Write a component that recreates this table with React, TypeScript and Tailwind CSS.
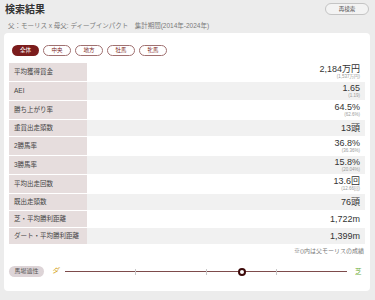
import React from 'react';

type Row = { label: string; value: string; sub?: string };

const rows: Row[] = [
  { label: '平均獲得賞金', value: '2,184万円', sub: '(1,537万円)' },
  { label: 'AEI', value: '1.65', sub: '(1.19)' },
  { label: '勝ち上がり率', value: '64.5%', sub: '(62.6%)' },
  { label: '重賞出走頭数', value: '13頭' },
  { label: '2勝馬率', value: '36.8%', sub: '(36.36%)' },
  { label: '3勝馬率', value: '15.8%', sub: '(20.04%)' },
  { label: '平均出走回数', value: '13.6回', sub: '(12.66回)' },
  { label: '既出走頭数', value: '76頭' },
  { label: '芝・平均勝利距離', value: '1,722m' },
  { label: 'ダート・平均勝利距離', value: '1,399m' },
];

const filters = ['全体', '中央', '地方', '牡馬', '牝馬'];

export default function App() {
  const font = { fontFamily: '"Liberation Sans", "Noto Sans CJK JP", sans-serif' };

  return (
    <div className="h-[300px] w-[375px] bg-[#ececec] overflow-hidden" style={font}>
      {/* Header */}
      <div className="flex items-start justify-between pl-[5px] pr-[6px] pt-[3px]">
        <h1 className="mt-[1px] text-[10px] leading-[12px] font-bold text-[#333]">検索結果</h1>
        <button className="h-[12px] w-[44px] rounded-full border border-[#c4c4c4] bg-[#f3f3f3] text-[5.5px] leading-[10px] text-[#555]">
          再検索
        </button>
      </div>
      <p className="mt-[6px] pl-[8px] text-[6.5px] leading-[8px] text-[#7a7a7a]">
        父：モーリス x 母父: ディープインパクト　集計期間(2014年-2024年)
      </p>

      {/* Card */}
      <div className="mt-[3px] ml-[4px] w-[366px] h-[258px] rounded-[4px] bg-white px-[5px] pt-[12px]">
        <div className="flex gap-[4px] pl-[3px]">
          {filters.map((f, i) => (
            <span
              key={f}
              className={
                i === 0
                  ? 'flex h-[11px] w-[27px] items-center justify-center rounded-full bg-[#7b1c1c] text-[5.5px] text-white'
                  : 'flex h-[11px] w-[28px] items-center justify-center rounded-full border border-[#a07070] bg-white text-[5.5px] text-[#7b1c1c]'
              }
            >
              {f}
            </span>
          ))}
        </div>

        {/* Stats table */}
        <div className="mt-[7px] flex flex-col">
          {rows.map((r, i) => (
            <div key={r.label} className="flex">
              <div className="flex w-[78px] items-center border-b border-white bg-[#e6dddd] pl-[5px] text-[6.5px] text-[#444]">
                {r.label}
              </div>
              <div
                className={`flex flex-1 flex-col items-end justify-center border-b border-white pr-[5px] ${
                  i % 2 === 0 ? 'bg-white' : 'bg-[#f1f1f1]'
                } ${r.sub ? 'min-h-[19px]' : 'min-h-[17px]'}`}
              >
                <span className="text-[9px] leading-[10px] text-[#333]">{r.value}</span>
                {r.sub && <span className="text-[4.5px] leading-[6px] text-[#999]">{r.sub}</span>}
              </div>
            </div>
          ))}
        </div>
        <p className="mt-[2px] pr-[1px] text-right text-[6px] leading-[8px] text-[#777]">※()内は父モーリスの成績</p>

        {/* Track aptitude */}
        <div className="mt-[11px] flex items-center">
          <span className="flex h-[11px] w-[35px] items-center justify-center rounded-full bg-[#ddd4d7] text-[6px] text-[#555]">
            馬場適性
          </span>
          <span className="ml-[8px] text-[7px] italic text-[#d4a41c]">ダ</span>
          <div className="relative ml-[6px] h-[8px] w-[282px]">
            <div className="absolute left-0 right-0 top-[3px] h-[1.5px] bg-[#7d4b4b]" />
            <div className="absolute left-[70px] top-[1px] h-[6px] w-px bg-[#c8c8c8]" />
            <div className="absolute left-[141px] top-[1px] h-[6px] w-px bg-[#c8c8c8]" />
            <div className="absolute left-[211px] top-[1px] h-[6px] w-px bg-[#c8c8c8]" />
            <div className="absolute left-[173px] top-0 h-[8px] w-[8px] rounded-full border-[2px] border-[#3d0a0a] bg-white" />
          </div>
          <span className="ml-[8px] text-[6.5px] text-[#6fae3a]">芝</span>
        </div>
      </div>
    </div>
  );
}
